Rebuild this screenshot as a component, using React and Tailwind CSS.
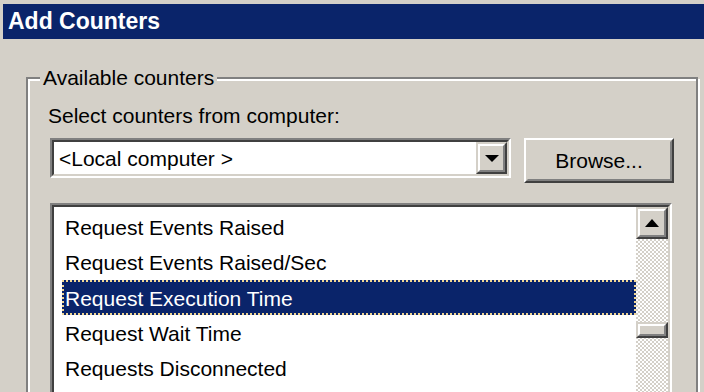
const counters = [
    "Request Events Raised",
    "Request Events Raised/Sec",
    "Request Execution Time",
    "Request Wait Time",
    "Requests Disconnected",
];

function ArrowDown() {
    return (
        <svg width="14" height="7" viewBox="0 0 14 7">
            <path d="M0 0 H14 L7 7 Z" fill="#000" />
        </svg>
    );
}

function ArrowUp() {
    return (
        <svg width="14" height="8" viewBox="0 0 14 8">
            <path d="M7 0 L14 8 H0 Z" fill="#000" />
        </svg>
    );
}

export default function App() {
    const selected = 2;

    return (
        <div
            className="w-[704px] h-[392px] overflow-hidden bg-[#d4d0c8] pt-[4px] pl-[3px] text-black"
            style={{fontFamily: '"Liberation Sans", Arial, sans-serif'}}>
            {/* title bar */}
            <div className="h-[35px] bg-[#0a246a] flex items-center pl-[5px] pb-[1px]">
                <span className="text-white font-bold text-[23px] leading-none">Add Counters</span>
            </div>

            <fieldset className="ml-[23px] mt-[27px] w-[672px] h-[400px] border-2 border-[#808080] shadow-[inset_2px_2px_0_#fff,2px_2px_0_#fff] p-0 m-0">
                <legend className="ml-[12px] px-[3px] text-[21px] leading-[24px] bg-[#d4d0c8]">Available counters</legend>

                <div className="pl-[22px] pt-[14px]">
                    <p className="-ml-[2px] text-[21px] leading-[24px]">Select counters from computer:</p>

                    <div className="mt-[10px] flex items-start gap-[13px]">
                        {/* combo box */}
                        <div className="w-[461px] h-[40px] border-2 border-t-[#808080] border-l-[#808080] border-b-white border-r-white">
                            <div className="h-full flex bg-white border-2 border-t-[#404040] border-l-[#404040] border-b-[#d4d0c8] border-r-[#d4d0c8]">
                                <div className="flex-1 flex items-center pl-[5px] text-[21px] leading-none">&lt;Local computer &gt;</div>
                                <div className="w-[31px] h-full border-2 border-t-[#d4d0c8] border-l-[#d4d0c8] border-b-[#404040] border-r-[#404040]">
                                    <div className="h-full bg-[#d4d0c8] flex items-center justify-center border-2 border-t-white border-l-white border-b-[#808080] border-r-[#808080]">
                                        <ArrowDown />
                                    </div>
                                </div>
                            </div>
                        </div>

                        {/* browse button */}
                        <div className="w-[150px] h-[45px] border-2 border-t-white border-l-white border-b-[#404040] border-r-[#404040]">
                            <div className="h-full flex items-center justify-center text-[21px] leading-none border-2 border-t-[#d4d0c8] border-l-[#d4d0c8] border-b-[#808080] border-r-[#808080]">
                                Browse...
                            </div>
                        </div>
                    </div>

                    {/* counters list */}
                    <div className="mt-[20px] w-[622px] h-[220px] border-2 border-t-[#808080] border-l-[#808080] border-b-white border-r-white">
                        <div className="h-full flex bg-white border-2 border-t-[#404040] border-l-[#404040] border-b-[#d4d0c8] border-r-[#d4d0c8]">
                            <div className="flex-1 pl-[8px] pt-[2px]">
                                {counters.map((name, index) =>
                                    index === selected ? (
                                        <div
                                            key={index}
                                            className="h-[35px] flex items-center pl-[1px] pt-[1px] bg-[#0a246a] text-white border-2 border-dotted border-[#f2d793] text-[21px] leading-none">
                                            {name}
                                        </div>
                                    ) : (
                                        <div key={index} className="h-[35.5px] flex items-center pl-[3px] pt-[1px] text-[21px] leading-none">
                                            {name}
                                        </div>
                                    )
                                )}
                            </div>

                            {/* scrollbar */}
                            <div className="w-[32px] h-full flex flex-col bg-[image:repeating-conic-gradient(#d4d0c8_0_25%,#ffffff_0_50%)] bg-[length:4px_4px]">
                                <div className="h-[32px] border-2 border-t-[#d4d0c8] border-l-[#d4d0c8] border-b-[#404040] border-r-[#404040]">
                                    <div className="h-full bg-[#d4d0c8] flex items-center justify-center border-2 border-t-white border-l-white border-b-[#808080] border-r-[#808080]">
                                        <ArrowUp />
                                    </div>
                                </div>
                                <div className="mt-[83px] h-[16px] border-2 border-t-[#d4d0c8] border-l-[#d4d0c8] border-b-[#404040] border-r-[#404040]">
                                    <div className="h-full bg-[#d4d0c8] border-2 border-t-white border-l-white border-b-[#808080] border-r-[#808080]" />
                                </div>
                            </div>
                        </div>
                    </div>
                </div>
            </fieldset>
        </div>
    );
}
